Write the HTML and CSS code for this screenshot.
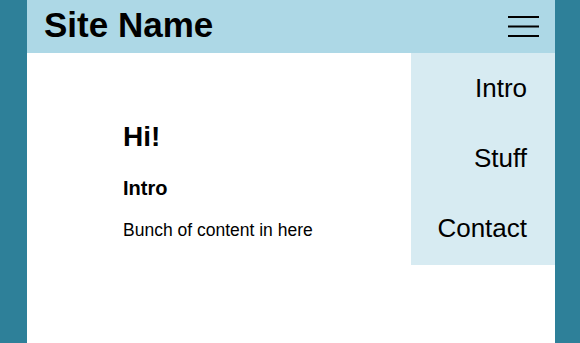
FILE: index.html
```html
<!DOCTYPE html>
<html lang="en">
<head>
<meta charset="utf-8">
<title>Site Name</title>
<link rel="stylesheet" href="styles.css">
</head>
<body>
<div class="page">
  <header class="site-header">
    <h1 class="site-name">Site Name</h1>
    <button class="menu-toggle" aria-label="Menu">
      <svg width="31" height="21" viewBox="0 0 31 21"><rect x="0" y="0" width="31" height="2" fill="#000"/><rect x="0" y="9.5" width="31" height="2" fill="#000"/><rect x="0" y="19" width="31" height="2" fill="#000"/></svg>
    </button>
  </header>
  <nav class="menu">
    <a class="menu-item" href="#">Intro</a>
    <a class="menu-item" href="#">Stuff</a>
    <a class="menu-item" href="#">Contact</a>
  </nav>
  <main class="content">
    <h2 class="title">Hi!</h2>
    <h3 class="subtitle">Intro</h3>
    <p class="text">Bunch of content in here</p>
  </main>
</div>
</body>
</html>
```

FILE: styles.css
```css
html, body {
  margin: 0;
  padding: 0;
  height: 100%;
}
body {
  background: #2e8099;
  font-family: "Liberation Sans", Arial, sans-serif;
  color: #000;
}
.page {
  position: relative;
  margin: 0 25px 0 27px;
  min-height: 100%;
  background: #fff;
}
.site-header {
  height: 53px;
  background: #add8e6;
  display: flex;
  align-items: flex-start;
  justify-content: space-between;
  padding: 0 16px 0 17px;
}
.site-name {
  margin: 0;
  font-size: 35px;
  line-height: 50px;
  font-weight: bold;
}
.menu-toggle {
  margin-top: 16px;
  padding: 0;
  border: 0;
  background: none;
  display: block;
  line-height: 0;
}
.menu {
  position: absolute;
  top: 53px;
  right: 0;
  width: 144px;
  background: #d7ebf2;
  padding-bottom: 2px;
  display: flex;
  flex-direction: column;
}
.menu-item {
  display: flex;
  align-items: center;
  justify-content: flex-end;
  height: 70px;
  padding-right: 28px;
  font-size: 26px;
  color: #000;
  text-decoration: none;
}
.content {
  padding: 68px 0 0 96px;
}
.title {
  margin: 0;
  font-size: 28px;
  line-height: 32px;
  font-weight: bold;
}
.subtitle {
  margin: 23px 0 0;
  font-size: 20px;
  line-height: 24px;
  font-weight: bold;
}
.text {
  margin: 19px 0 0;
  font-size: 17.5px;
  line-height: 22px;
}
```
